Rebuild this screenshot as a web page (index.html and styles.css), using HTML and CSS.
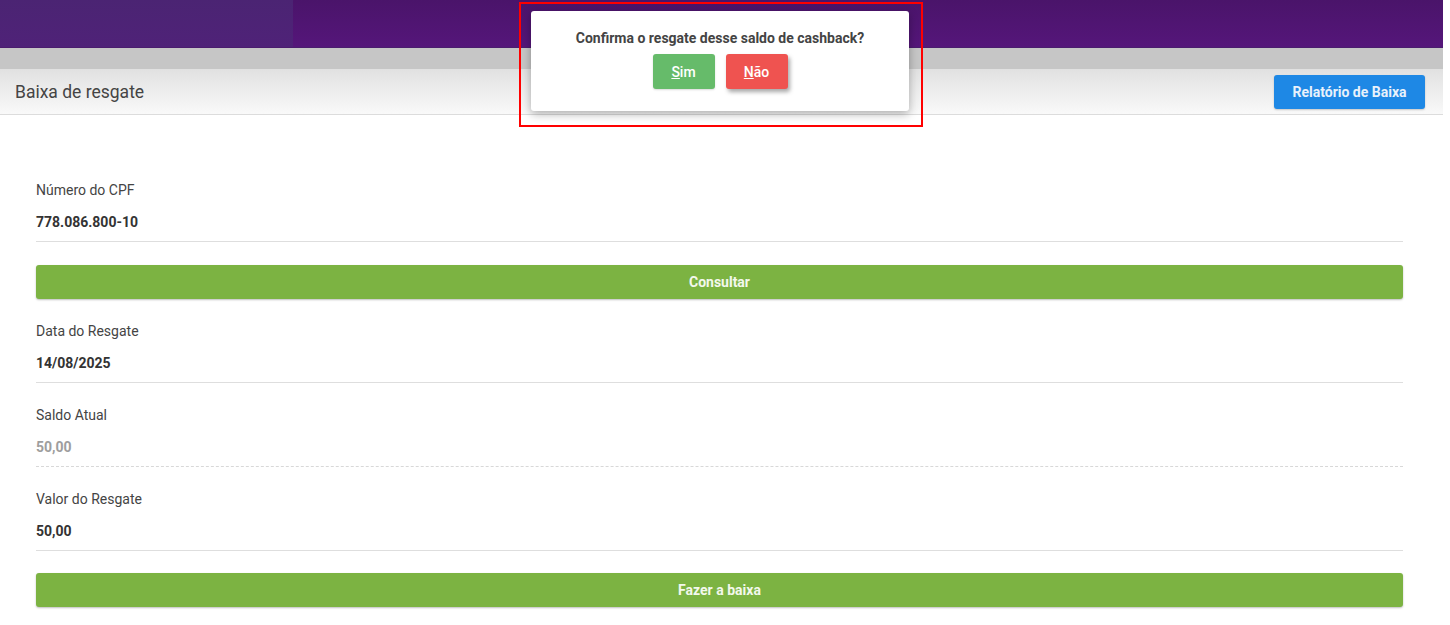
FILE: index.html
```html
<!DOCTYPE html>
<html lang="pt-BR">
<head>
<meta charset="utf-8">
<title>Baixa de resgate</title>
<link rel="stylesheet" href="styles.css">
</head>
<body>
<div class="app">
  <header class="topbar">
    <div class="topbar-left"></div>
    <div class="topbar-right"></div>
  </header>
  <div class="subbar"></div>
  <div class="titlebar">
    <h1 class="title">Baixa de resgate</h1>
    <button class="btn btn-blue">Relatório de Baixa</button>
  </div>
  <main class="form">
    <div class="field first">
      <label class="label">Número do CPF</label>
      <div class="value">778.086.800-10</div>
    </div>
    <button class="btn btn-green btn-block">Consultar</button>
    <div class="field">
      <label class="label">Data do Resgate</label>
      <div class="value">14/08/2025</div>
    </div>
    <div class="field readonly">
      <label class="label">Saldo Atual</label>
      <div class="value">50,00</div>
    </div>
    <div class="field last">
      <label class="label">Valor do Resgate</label>
      <div class="value">50,00</div>
    </div>
    <button class="btn btn-green btn-block">Fazer a baixa</button>
  </main>
</div>

<div class="highlight">
  <div class="dialog">
    <p class="dialog-text">Confirma o resgate desse saldo de cashback?</p>
    <div class="dialog-actions">
      <button class="btn btn-sim"><u>S</u>im</button>
      <button class="btn btn-nao"><u>N</u>ão</button>
    </div>
  </div>
</div>
</body>
</html>
```
FILE: styles.css
```css
* { box-sizing: border-box; }
html, body { margin: 0; padding: 0; background: #fff; }
body {
  font-family: Roboto, "Liberation Sans", Arial, sans-serif;
  color: #444;
  width: 1450px;
  height: 625px;
  overflow: hidden;
  position: relative;
}
.app { width: 1443px; }

.topbar {
  height: 48px;
  display: flex;
  border-bottom: 1px solid #4a1d6e;
}
.topbar-left {
  width: 293px;
  background: linear-gradient(#4b2473, #4f2278);
}
.topbar-right {
  flex: 1;
  background: linear-gradient(#4a146a, #55167a);
}
.subbar {
  height: 21px;
  background: #c6c6c6;
}
.titlebar {
  height: 46px;
  background: linear-gradient(#e1e1e1, #f9f9f9);
  border-bottom: 1px solid #dcdcdc;
  display: flex;
  align-items: center;
  justify-content: space-between;
  padding: 0 18px 0 15px;
}
.title {
  margin: 0;
  font-size: 17.5px;
  font-weight: 400;
  color: #444;
  line-height: 20px;
}

.btn {
  font-family: Roboto, "Liberation Sans", Arial, sans-serif;
  border: 0;
  color: #fff;
  font-weight: 700;
  font-size: 14px;
  border-radius: 3px;
  cursor: pointer;
  padding: 0;
}
.btn-blue {
  background: #1e88e5;
  width: 151px;
  height: 34px;
  box-shadow: 0 1px 2px rgba(0,0,0,0.2);
  color: #e8f1fb;
}

.form {
  padding: 67px 40px 0 36px;
  display: flex;
  flex-direction: column;
}

.field {
  border-bottom: 1px solid #dedede;
  height: 60px;
  margin-bottom: 24px;
}
.field.first { margin-bottom: 23px; }
.field.last { margin-bottom: 22px; }
.label {
  display: block;
  font-size: 14px;
  color: #444;
  line-height: 16px;
}
.value {
  margin-top: 16px;
  font-size: 14px;
  font-weight: 700;
  color: #333;
  line-height: 16px;
}
.readonly { border-bottom: 1px dashed #d8d8d8; }
.readonly .value { color: #9e9e9e; }

.btn-green {
  background: #7cb342;
  height: 34px;
  color: #f3f8ec;
  box-shadow: 0 1px 2px rgba(0,0,0,0.25);
}
.btn-block { width: 100%; margin-bottom: 24px; }

.highlight {
  position: absolute;
  left: 519px;
  top: 2px;
  width: 404px;
  height: 125px;
  border: 2px solid #f00;
  padding: 7px 0 0 10px;
}
.dialog {
  width: 378px;
  height: 100px;
  background: #fff;
  border-radius: 3px;
  box-shadow: 0 3px 10px rgba(0,0,0,0.3);
  display: flex;
  flex-direction: column;
  align-items: center;
  padding-top: 19px;
}
.dialog-text {
  margin: 0;
  font-size: 14px;
  font-weight: 700;
  color: #444;
  line-height: 16px;
}
.dialog-actions {
  display: flex;
  gap: 11px;
  margin-top: 8px;
}
.btn-sim, .btn-nao {
  width: 62px;
  height: 35px;
  font-size: 14px;
  font-weight: 500;
}
.btn-sim {
  background: #66bb6a;
  box-shadow: 0 1px 2px rgba(0,0,0,0.15);
}
.btn-nao {
  background: #ef5350;
  box-shadow: 2px 3px 4px rgba(0,0,0,0.35);
}
```
